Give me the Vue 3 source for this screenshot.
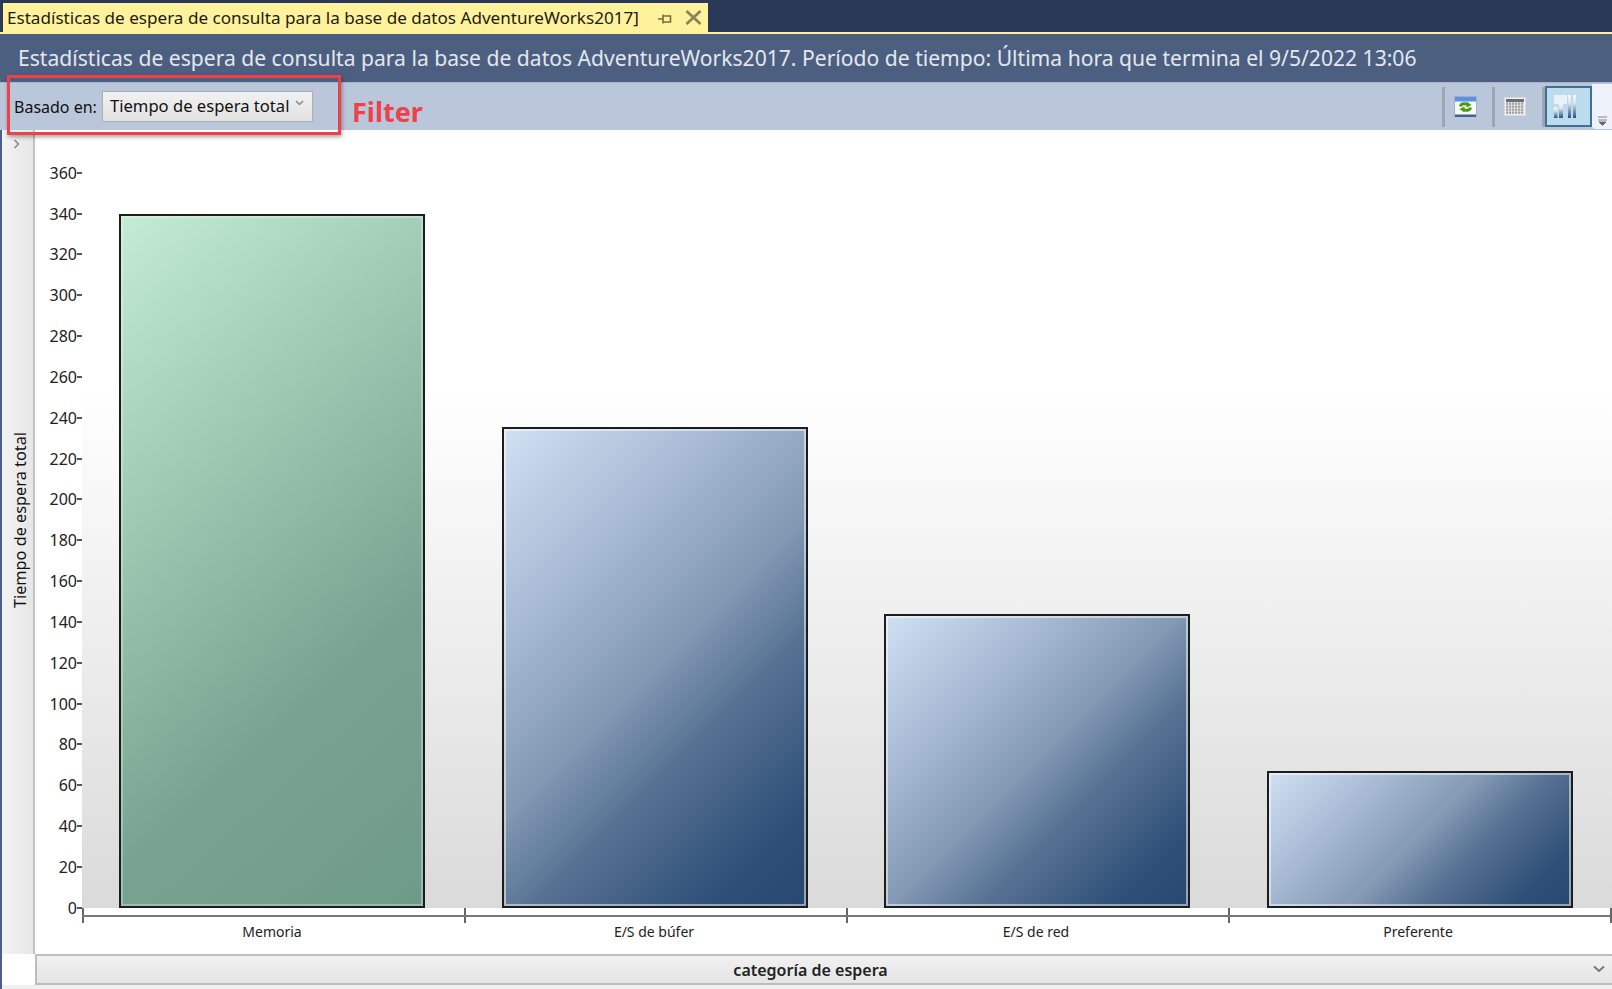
<script setup>
const yTicks = []
for (let v = 360; v >= 0; v -= 20) yTicks.push(v)

const pxPerUnit = 2.0417

const bars = [
  { label: 'Memoria', value: 340, kind: 'green' },
  { label: 'E/S de búfer', value: 235.500, kind: 'blue' },
  { label: 'E/S de red', value: 144, kind: 'blue' },
  { label: 'Preferente', value: 67, kind: 'blue' },
]

const gridCells = []
for (let r = 0; r < 4; r++) {
  for (let c = 0; c < 6; c++) gridCells.push({ x: 2 + c * 3, y: 5.500 + r * 3 })
}

const miniBars = [
  { x: 0, y: 12, w: 3.500, h: 11 },
  { x: 5, y: 8, w: 4, h: 15 },
  { x: 14, y: 0, w: 3, h: 23 },
  { x: 19, y: 0, w: 3, h: 23 },
]
</script>

<template>
  <div class="window">
    <div class="tabstrip">
      <div class="tab">
        <span class="tab-text">Estadísticas de espera de consulta para la base de datos AdventureWorks2017]</span>
        <svg class="pin" width="14" height="14" viewBox="0 0 14 14">
          <path d="M0 8h5M5 3.500v9M5 5h7.500v6H5" fill="none" stroke="#7a6f3a" stroke-width="1.600" />
        </svg>
        <svg class="close" width="17" height="15" viewBox="0 0 17 15">
          <path d="M1.500 1l14 13M15.500 1l-14 13" fill="none" stroke="#8a8358" stroke-width="2.800" />
        </svg>
      </div>
    </div>

    <div class="title-bar">
      Estadísticas de espera de consulta para la base de datos AdventureWorks2017. Período de tiempo: Última hora que termina el 9/5/2022 13:06
    </div>

    <div class="toolbar">
      <span class="based-label">Basado en:</span>
      <div class="select">
        <span>Tiempo de espera total</span>
        <svg width="9" height="7" viewBox="0 0 9 7">
          <path d="M1 1l3.500 3.500L8 1" fill="none" stroke="#8a8a8a" stroke-width="1.500" />
        </svg>
      </div>

      <div class="tools">
        <span class="sep" />
        <div class="tool">
          <svg width="23" height="21" viewBox="0 0 23 21">
            <rect x="0.500" y="0.500" width="22" height="20" fill="#f7f9fb" stroke="#9fb2c9" />
            <rect x="1" y="1" width="21" height="4.500" fill="#5c90e6" />
            <rect x="1" y="18.500" width="21" height="2.500" fill="#44628a" />
            <path d="M6.500 10.500c.5-3 4.500-3.500 7-2M16.500 11.500c-.5 3-4.500 3.500-7 2" fill="none" stroke="#4f9a10" stroke-width="3" />
            <path d="M12.500 5.500l5 3.500-5 2.500zM10.500 16.500l-5-3.500 5-2.500z" fill="#4f9a10" />
          </svg>
        </div>
        <span class="sep" />
        <div class="tool">
          <svg width="22" height="19" viewBox="0 0 22 19">
            <rect x="0.500" y="0.500" width="21" height="18" fill="#eef0f3" stroke="#d6dbe3" />
            <rect x="2" y="2" width="18" height="3" fill="#6e6e6e" />
            <rect
              v-for="(cell, i) in gridCells"
              :key="i"
              :x="cell.x"
              :y="cell.y"
              width="2.300"
              height="2.300"
              fill="#a3a3a3"
            />
          </svg>
        </div>
        <span class="sep" />
        <div class="tool active">
          <svg width="22" height="23" viewBox="0 0 22 23">
            <defs>
              <linearGradient id="minibar" x1="0" y1="0" x2="0" y2="1">
                <stop offset="0" stop-color="#f4f7fa" />
                <stop offset="0.350" stop-color="#dbe5ee" />
                <stop offset="1" stop-color="#27527f" />
              </linearGradient>
            </defs>
            <rect x="0" y="0" width="13" height="9" fill="#f4f7fa" opacity="0.800" />
            <rect
              v-for="bar in miniBars"
              :key="bar.x"
              :x="bar.x"
              :y="bar.y"
              :width="bar.w"
              :height="bar.h"
              fill="url(#minibar)"
            />
          </svg>
        </div>
        <div class="overflow">
          <svg width="9" height="10" viewBox="0 0 9 10">
            <path d="M0 1h9M0 4h9M1 6h7l-3.500 3.500z" fill="#666" stroke="#666" stroke-width="0.800" />
          </svg>
        </div>
      </div>
    </div>

    <div class="body">
      <aside class="side">
        <svg class="side-chevron" width="8" height="10" viewBox="0 0 8 10">
          <path d="M1.500 1l4 4-4 4" fill="none" stroke="#8a8a8a" stroke-width="1.600" />
        </svg>
        <span class="side-title">Tiempo de espera total</span>
      </aside>

      <div class="chart">
        <div class="chart-top">
          <div class="y-axis">
            <div v-for="tick in yTicks" :key="tick" class="y-tick">{{ tick }}<i class="dash" /></div>
          </div>
          <div class="plot">
            <div v-for="bar in bars" :key="bar.label" class="bar-slot">
              <div
                class="bar"
                :class="bar.kind"
                :style="{ height: bar.value * pxPerUnit + 'px' }"
              />
            </div>
          </div>
        </div>
        <div class="x-axis">
          <div v-for="bar in bars" :key="bar.label" class="x-cell">{{ bar.label }}</div>
        </div>
      </div>
    </div>

    <div class="bottom-row">
      <div class="bottom-gap" />
      <div class="bottom-bar">
        <span>categoría de espera</span>
        <svg class="bottom-chevron" width="12" height="8" viewBox="0 0 12 8">
          <path d="M1 1.500l5 4.500 5-4.500" fill="none" stroke="#777" stroke-width="2" />
        </svg>
      </div>
    </div>
    <div class="foot" />

    <div class="callout" />
    <div class="callout-label">Filter</div>
  </div>
</template>

<style>
body {
  background: #fff;
}
</style>

<style scoped>
.window {
  position: relative;
  width: 1612px;
  height: 989px;
  overflow: hidden;
  display: flex;
  flex-direction: column;
  font-family: 'Noto Sans', 'Open Sans', sans-serif;
  background: #fff;
}

.tabstrip {
  height: 34px;
  flex-shrink: 0;
  box-sizing: border-box;
  padding: 3px 0 0 3px;
  background: #2a3958;
  border-bottom: 2px solid #fff29d;
}

.tab {
  width: 705px;
  height: 29px;
  display: flex;
  align-items: center;
  background: #fff29d;
  padding-left: 4px;
  box-sizing: border-box;
  font-size: 17.100px;
  color: #1c1c10;
}

.tab-text {
  white-space: nowrap;
  width: 651px;
}

.close {
  margin-left: 13px;
}

.title-bar {
  height: 48px;
  flex-shrink: 0;
  box-sizing: border-box;
  padding: 0 0 2px 18px;
  display: flex;
  align-items: center;
  background: #4d5f80;
  color: #e2e7ef;
  font-size: 21.100px;
  white-space: nowrap;
}

.toolbar {
  height: 48px;
  flex-shrink: 0;
  box-sizing: border-box;
  display: flex;
  align-items: center;
  padding-left: 14px;
  background: #bac7da;
  color: #111;
  font-size: 16px;
  border-top: 1px solid #a9b6ca;
}

.based-label {
  width: 88px;
  white-space: nowrap;
}

.select {
  width: 211px;
  height: 31px;
  box-sizing: border-box;
  display: flex;
  align-items: center;
  justify-content: space-between;
  padding: 0 8px 2px 7px;
  background: linear-gradient(#f1f1f1, #e2e2e2);
  border: 1px solid #aeaeae;
  white-space: nowrap;
  font-size: 16.600px;
}

.select svg {
  margin-bottom: 5px;
}

.tools {
  margin-left: auto;
  height: 100%;
  display: flex;
  align-items: center;
}

.sep {
  width: 3px;
  height: 40px;
  background: #9ca6b4;
}

.tool {
  width: 47px;
  box-sizing: border-box;
  padding-right: 7px;
  display: flex;
  justify-content: center;
}

.tool.active {
  width: 47px;
  height: 41px;
  padding-right: 7px;
  align-items: center;
  background: #bcdcee;
  border: 2px solid #3e6f96;
}

.overflow {
  width: 20px;
  height: 45px;
  box-sizing: border-box;
  display: flex;
  justify-content: center;
  align-items: flex-end;
  padding-bottom: 3px;
  background: #eef3fb;
  border-radius: 0 0 0 4px;
}

.body {
  flex: 1;
  min-height: 0;
  display: flex;
  border-left: 2px solid #4a5f8a;
}

.side {
  width: 31px;
  flex-shrink: 0;
  position: relative;
  display: flex;
  align-items: center;
  justify-content: center;
  background: linear-gradient(to right, #f3f3f3, #e6e6e6);
  border-right: 2px solid #c2c2c2;
}

.side-chevron {
  position: absolute;
  top: 9px;
  left: 11px;
}

.side-title {
  writing-mode: vertical-rl;
  transform: rotate(180deg);
  margin-bottom: 44px;
  margin-left: 4px;
  font-size: 16.300px;
  color: #111;
  white-space: nowrap;
}

.chart {
  flex: 1;
  min-width: 0;
  display: flex;
  flex-direction: column;
}

.chart-top {
  height: 778px;
  display: flex;
}

.y-axis {
  width: 47px;
  flex-shrink: 0;
  box-sizing: border-box;
  padding-top: 22.400px;
  display: flex;
  flex-direction: column;
  color: #222;
  font-size: 16px;
}

.y-tick {
  height: 40.830px;
  display: flex;
  align-items: center;
  justify-content: flex-end;
  flex-shrink: 0;
}

.dash {
  width: 5px;
  height: 2px;
  background: #555;
}

.plot {
  flex: 1;
  min-width: 0;
  display: flex;
  background: linear-gradient(#fff 0%, #fff 33%, #dadada 100%);
}

.bar-slot {
  flex: 1;
  display: flex;
  align-items: flex-end;
  justify-content: center;
}

.bar {
  width: 306px;
  margin-right: 2px;
  box-sizing: border-box;
  border: 2px solid #1d1d1d;
  position: relative;
}

.bar::after {
  content: '';
  position: absolute;
  inset: 0;
  border: 2px solid rgba(255, 255, 255, 0.5);
}

.bar.green {
  background: linear-gradient(138deg, #c4ecd4 0%, #78a390 68%, #6e9b88 100%);
}

.bar.green::after {
  border-color: rgba(255, 255, 255, 0.3);
}

.bar.blue {
  background: linear-gradient(135deg, #cfe0f2 0%, #abbdd6 25%, #8298b3 50%, #567293 65%, #2e4e76 88%, #294870 100%);
}

.x-axis {
  margin-left: 47px;
  display: flex;
  position: relative;
  border-right: 2px solid #666;
  height: 15px;
}

.x-axis::before {
  content: '';
  position: absolute;
  left: 0;
  right: 0;
  top: 7px;
  height: 2px;
  background: #777;
}

.x-cell {
  flex: 1;
  height: 15px;
  box-sizing: border-box;
  border-left: 2px solid #666;
  padding-top: 14px;
  padding-right: 4px;
  text-align: center;
  font-size: 14px;
  color: #222;
  white-space: nowrap;
}

.bottom-row {
  height: 31px;
  flex-shrink: 0;
  display: flex;
}

.bottom-gap {
  width: 35px;
  flex-shrink: 0;
  box-sizing: border-box;
  border-left: 2px solid #4a5f8a;
}

.bottom-bar {
  flex: 1;
  min-width: 0;
  position: relative;
  display: flex;
  align-items: center;
  justify-content: center;
  box-sizing: border-box;
  background: linear-gradient(#f1f1f1, #e5e5e5);
  border: 1px solid #bdbdbd;
  border-width: 2px 0 2px 2px;
  font-size: 16px;
  font-weight: 600;
  color: #222;
  padding-right: 28px;
}

.bottom-chevron {
  position: absolute;
  right: 7px;
  top: 9px;
}

.foot {
  height: 4px;
  flex-shrink: 0;
  background: #f0f0f0;
  border-left: 2px solid #4a5f8a;
}

.callout {
  position: absolute;
  left: 7px;
  top: 75px;
  width: 334px;
  height: 60px;
  box-sizing: border-box;
  border: 3px solid #f0404a;
  box-shadow: 1px 2px 4px rgba(0, 0, 0, 0.35);
}

.callout-label {
  position: absolute;
  left: 352px;
  top: 92px;
  color: #f0404a;
  font-size: 27px;
  font-weight: 700;
  line-height: 40px;
}
</style>
